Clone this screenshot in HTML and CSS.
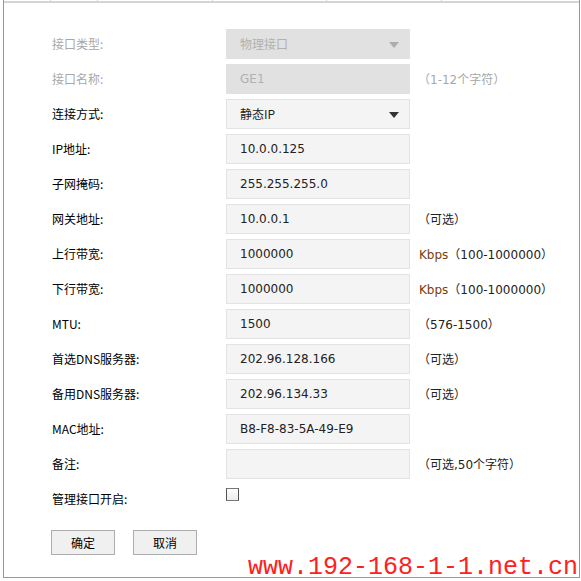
FILE: index.html
```html
<!DOCTYPE html>
<html lang="zh-CN">
<head>
  <meta charset="UTF-8" />
  <title>接口设置</title>
  <link rel="stylesheet" href="styles.css">
</head>
<body>
  <div class="frame">
    <div class="tabs">
      <span style="width:46px"></span>
      <span style="width:46px"></span>
      <span style="width:114px"></span>
      <span style="width:113px"></span>
      <span style="width:114px"></span>
    </div>

    <form class="form">
      <div class="row disabled">
        <label>接口类型:</label>
        <div class="field select">物理接口<i class="arrow"></i></div>
      </div>
      <div class="row disabled">
        <label>接口名称:</label>
        <div class="field">GE1</div>
        <span class="hint muted">（1-12个字符）</span>
      </div>
      <div class="row">
        <label>连接方式:</label>
        <div class="field select">静态IP<i class="arrow"></i></div>
      </div>
      <div class="row">
        <label>IP地址:</label>
        <div class="field">10.0.0.125</div>
      </div>
      <div class="row">
        <label>子网掩码:</label>
        <div class="field">255.255.255.0</div>
      </div>
      <div class="row">
        <label>网关地址:</label>
        <div class="field">10.0.0.1</div>
        <span class="hint">（可选）</span>
      </div>
      <div class="row">
        <label>上行带宽:</label>
        <div class="field">1000000</div>
        <span class="hint unit"><b>Kbps</b>（100-1000000）</span>
      </div>
      <div class="row">
        <label>下行带宽:</label>
        <div class="field">1000000</div>
        <span class="hint unit"><b>Kbps</b>（100-1000000）</span>
      </div>
      <div class="row">
        <label>MTU:</label>
        <div class="field">1500</div>
        <span class="hint">（576-1500）</span>
      </div>
      <div class="row">
        <label>首选DNS服务器:</label>
        <div class="field">202.96.128.166</div>
        <span class="hint">（可选）</span>
      </div>
      <div class="row">
        <label>备用DNS服务器:</label>
        <div class="field">202.96.134.33</div>
        <span class="hint">（可选）</span>
      </div>
      <div class="row">
        <label>MAC地址:</label>
        <div class="field">B8-F8-83-5A-49-E9</div>
      </div>
      <div class="row">
        <label>备注:</label>
        <div class="field"></div>
        <span class="hint">（可选,50个字符）</span>
      </div>
      <div class="row check-row">
        <label>管理接口开启:</label>
        <span class="checkbox"></span>
      </div>

      <div class="actions">
        <button type="button">确定</button>
        <button type="button">取消</button>
      </div>
    </form>

    <div class="watermark">www.192-168-1-1.net.cn</div>
  </div>
</body>
</html>
```

FILE: styles.css
```css
body {
  margin: 0;
  background: #fff;
  font-family: "Noto Sans CJK SC", sans-serif;
  font-size: 12px;
  color: #000;
}
.frame {
  position: relative;
  margin-left: 3px;
  width: 577px;
  height: 578px;
  box-sizing: border-box;
  border-left: 1px solid #7f9db9;
  border-right: 1px solid #7f9db9;
  border-bottom: 1px solid #7f9db9;
}
.tabs {
  display: flex;
  height: 1px;
  border-bottom: 2px solid #d4d4d4;
}
.tabs span {
  border-right: 1px solid #d4d4d4;
}
.form {
  padding: 26px 0 0 48px;
}
.row {
  display: flex;
  align-items: center;
  height: 30px;
  margin-bottom: 5px;
}
.row label {
  width: 174px;
  flex: none;
  margin-bottom: 2px;
}
.field {
  position: relative;
  width: 184px;
  height: 30px;
  box-sizing: border-box;
  padding-left: 13px;
  line-height: 28px;
  background: #f4f4f4;
  border: 1px solid #e3e3e3;
  font-family: "DejaVu Sans", "Noto Sans CJK SC", sans-serif;
  color: #222;
}
.select {
  font-family: "Noto Sans CJK SC", sans-serif;
}
.arrow {
  position: absolute;
  right: 10px;
  top: 12px;
  width: 0;
  height: 0;
  border-left: 5px solid transparent;
  border-right: 5px solid transparent;
  border-top: 6px solid #333;
}
.disabled label {
  color: #a8a8a8;
}
.disabled .field {
  background: #e1e1e1;
  border-color: #e1e1e1;
  color: #b0b0b0;
}
.disabled .arrow {
  border-top-color: #acacac;
}
.hint {
  margin-left: 8px;
  margin-bottom: 2px;
  font-family: "DejaVu Sans", "Noto Sans CJK SC", sans-serif;
  color: #222;
}
.hint.muted {
  color: #a8a8a8;
}
.hint.unit {
  margin-left: 9px;
}
.hint b {
  font-weight: normal;
  color: #7a3d08;
}
.check-row .checkbox {
  align-self: flex-start;
  margin-top: 4px;
  width: 13px;
  height: 13px;
  box-sizing: border-box;
  border: 1px solid #555;
  border-top-color: #777;
  border-bottom-color: #777;
  background: linear-gradient(#fdfdfd, #ececec);
}
.actions {
  display: flex;
  gap: 18px;
  margin: 16px 0 0 -1px;
}
.actions button {
  width: 64px;
  height: 25px;
  padding: 0;
  background: #f0f0f0;
  border: 1px solid #adadad;
  font-family: "Noto Sans CJK SC", sans-serif;
  font-size: 12px;
  color: #000;
}
.watermark {
  position: absolute;
  left: 244px;
  top: 555px;
  font-family: "Liberation Mono", monospace;
  font-size: 25px;
  line-height: 25px;
  color: #ff2020;
}
```
